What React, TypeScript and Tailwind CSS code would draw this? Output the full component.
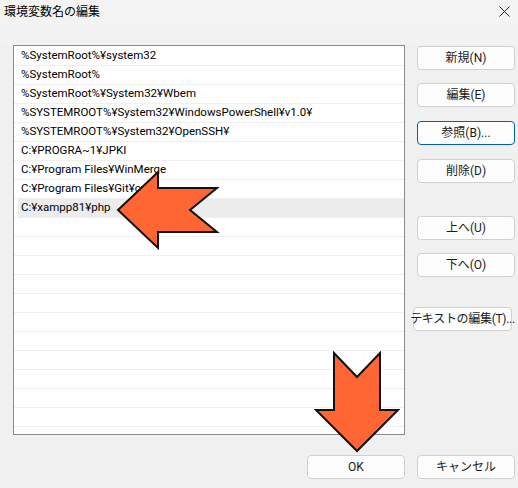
import React from "react";

const rows = [
  "%SystemRoot%¥system32",
  "%SystemRoot%",
  "%SystemRoot%¥System32¥Wbem",
  "%SYSTEMROOT%¥System32¥WindowsPowerShell¥v1.0¥",
  "%SYSTEMROOT%¥System32¥OpenSSH¥",
  "C:¥PROGRA~1¥JPKI",
  "C:¥Program Files¥WinMerge",
  "C:¥Program Files¥Git¥cmd",
  "C:¥xampp81¥php",
];

function Btn({ label, focused, className = "" }: { label: string; focused?: boolean; className?: string }) {
  return (
    <div
      className={
        "h-[24px] flex items-center justify-center whitespace-nowrap rounded-[4px] border bg-[#fdfdfd] text-[12px] text-[#1b1b1b] " +
        (focused ? "border-[#005fb8] " : "border-[#d0d0d0] ") +
        className
      }
    >
      {label}
    </div>
  );
}

export default function App() {
  const total = 20;
  return (
    <div
      className="relative w-[518px] h-[488px] bg-[#f0f0f0] overflow-hidden"
      style={{ fontFamily: 'Roboto, "Noto Sans CJK JP", sans-serif' }}
    >
      <div className="h-[24px] flex items-center justify-between pl-[4px] pr-[8px] bg-[#f3f3f3]">
        <span className="text-[12px] text-black">環境変数名の編集</span>
        <svg width="11" height="11" viewBox="0 0 11 11" className="mt-[-1px]">
          <path d="M0.5 0.5 L10.5 10.5 M10.5 0.5 L0.5 10.5" stroke="#222" strokeWidth="1" />
        </svg>
      </div>
      <div className="h-[21px] bg-[#f2f2f2]" />
      <div className="flex pl-[13px] pr-[3px]">
        <div className="w-[392px] h-[390px] border border-[#868a91] bg-white pt-[1px] overflow-hidden">
          {Array.from({ length: total }).map((_, i) => {
            const text = rows[i] ?? "";
            const sel = i === 8;
            return (
              <div key={i} className="h-[19px] border-b border-[#f0f0f0] flex">
                <div
                  className={
                    "ml-[4px] pl-[3px] flex-1 flex items-center text-[11.5px] text-black leading-none whitespace-nowrap " +
                    (sel ? "bg-[#ececec]" : "")
                  }
                >
                  {text}
                </div>
              </div>
            );
          })}
        </div>
        <div className="ml-[12px] w-[98px] flex flex-col">
          <Btn label="新規(N)" className="mt-[1px]" />
          <Btn label="編集(E)" className="mt-[13px]" />
          <Btn label="参照(B)..." focused className="mt-[14px]" />
          <Btn label="削除(D)" className="mt-[14px]" />
          <Btn label="上へ(U)" className="mt-[33px]" />
          <Btn label="下へ(O)" className="mt-[13px]" />
          <Btn label="テキストの編集(T)..." className="mt-[30px] -ml-[4px] w-[99px] tracking-[-0.3px]" />
        </div>
      </div>
      <div className="flex justify-end gap-[12px] pr-[3px] mt-[20px]">
        <Btn label="OK" className="w-[98px]" />
        <Btn label="キャンセル" className="w-[98px]" />
      </div>
      <svg
        className="absolute left-0 top-0 pointer-events-none"
        width="518"
        height="488"
        viewBox="0 0 518 488"
      >
        <polygon
          points="118,210 158,172 158,188 217,188 190,210 217,232 158,232 158,248"
          fill="#ff6633"
          stroke="#111"
          strokeWidth="2"
          strokeLinejoin="miter"
        />
        <polygon
          points="334,353 357,377 380,353 380,410 398,410 357,451 316,410 334,410"
          fill="#ff6633"
          stroke="#111"
          strokeWidth="2"
          strokeLinejoin="miter"
        />
      </svg>
    </div>
  );
}
